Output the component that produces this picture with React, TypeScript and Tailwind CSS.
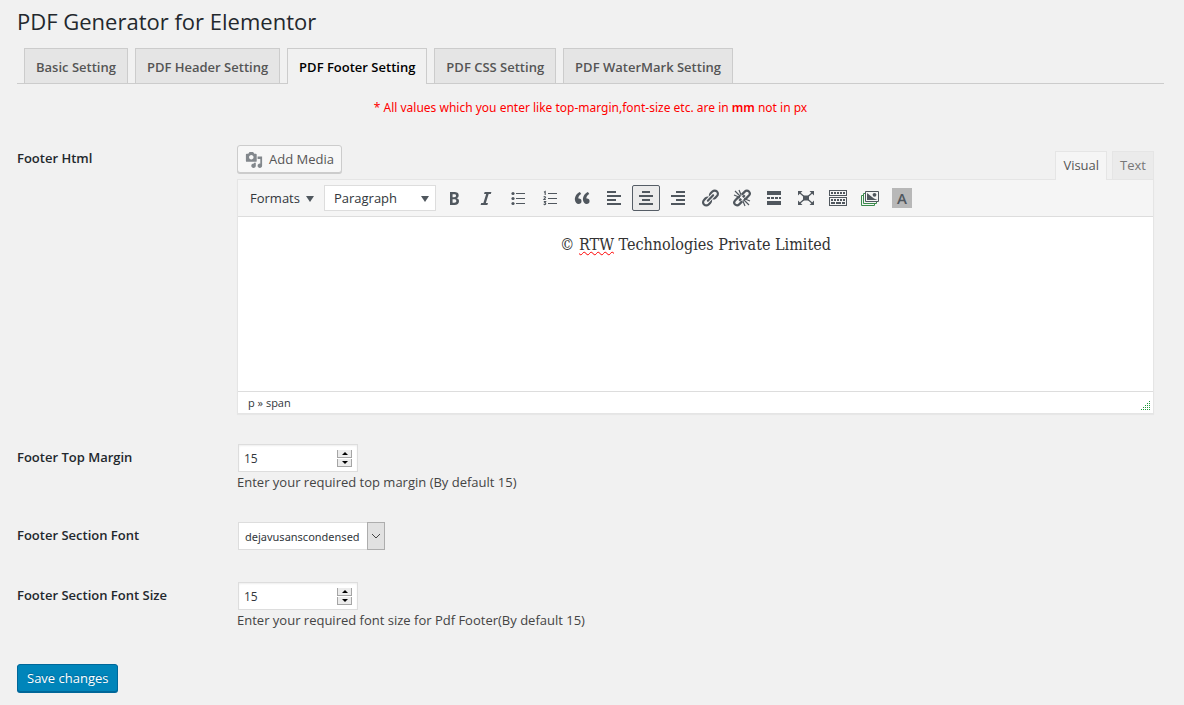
import { useState } from "react";
import type { ReactNode } from "react";

const tabs = [
  "Basic Setting",
  "PDF Header Setting",
  "PDF Footer Setting",
  "PDF CSS Setting",
  "PDF WaterMark Setting",
];

function Glyph({ children }: { children: ReactNode }) {
  return (
    <svg viewBox="0 0 20 20" className="size-5" fill="currentColor" aria-hidden="true">
      {children}
    </svg>
  );
}

const tools: { label: string; icon: ReactNode }[] = [
  {
    label: "Bold",
    icon: (
      <path d="M6 4v13h4.54c1.37 0 2.46-.33 3.26-1 .8-.66 1.2-1.58 1.2-2.77 0-.84-.17-1.51-.51-2.01s-.9-.85-1.67-1.03v-.09c.57-.1 1.02-.4 1.36-.9s.51-1.13.51-1.91c0-1.14-.39-1.98-1.17-2.5C12.75 4.26 11.5 4 9.78 4H6zm2.57 5.15V6.26h1.36c.73 0 1.27.11 1.61.32.34.22.51.58.51 1.07 0 .54-.16.92-.47 1.15s-.82.35-1.51.35h-1.5zm0 2.19h1.6c1.44 0 2.16.53 2.16 1.61 0 .6-.17 1.05-.51 1.34s-.86.43-1.57.43H8.57v-3.38z" />
    ),
  },
  {
    label: "Italic",
    icon: <path d="M14.78 6h-2.13l-2.8 9h2.12l-.62 2H4.6l.62-2h2.14l2.8-9H8.03l.62-2h6.75z" />,
  },
  {
    label: "Bulleted list",
    icon: (
      <>
        <circle cx="5" cy="5.5" r="1.6" />
        <circle cx="5" cy="10.5" r="1.6" />
        <circle cx="5" cy="15.5" r="1.6" />
        <path d="M8 5h9v1H8zM8 10h9v1H8zM8 15h9v1H8z" />
      </>
    ),
  },
  {
    label: "Numbered list",
    icon: (
      <>
        <path d="M8 5h9v1H8zM8 10h9v1H8zM8 15h9v1H8z" />
        <path
          d="M4 4.2l1.2-.7V7M3.8 9.2c.4-.8 2-.7 1.8.3-.1.7-1.2 1-1.8 2h2M3.8 13.5h1.8l-1 1.2c1.6 0 1.4 1.9.1 1.9-.5 0-.8-.1-1-.4"
          fill="none"
          stroke="currentColor"
          strokeWidth="1.1"
        />
      </>
    ),
  },
  {
    label: "Blockquote",
    icon: (
      <path d="M9.49 13.22c0-.74-.2-1.38-.61-1.9-.62-.78-1.83-.88-2.53-.72-.29-1.65 1.11-3.75 2.92-4.65L7.88 4c-2.73 1.3-5.42 4.28-4.96 8.05C3.21 14.43 4.59 16 6.54 16c.85 0 1.56-.25 2.12-.75s.83-1.18.83-2.03zm8.05 0c0-.74-.2-1.38-.61-1.9-.63-.78-1.83-.88-2.53-.72-.29-1.65 1.11-3.75 2.92-4.65L15.93 4c-2.73 1.3-5.41 4.28-4.95 8.05.29 2.38 1.66 3.95 3.61 3.95.85 0 1.56-.25 2.12-.75s.83-1.18.83-2.03z" />
    ),
  },
  { label: "Align left", icon: <path d="M12 5V3H3v2h9zm5 4V7H3v2h14zm-5 4v-2H3v2h9zm5 4v-2H3v2h14z" /> },
  { label: "Align center", icon: <path d="M14 5V3H6v2h8zm3 4V7H3v2h14zm-3 4v-2H6v2h8zm3 4v-2H3v2h14z" /> },
  { label: "Align right", icon: <path d="M17 5V3H8v2h9zm0 4V7H3v2h14zm0 4v-2H8v2h9zm0 4v-2H3v2h14z" /> },
  {
    label: "Insert link",
    icon: (
      <path d="M17.74 2.76c1.68 1.69 1.68 4.41 0 6.1l-1.53 1.52c-1.12 1.12-2.7 1.47-4.14 1.09l2.62-2.61.76-.77.76-.76c.84-.84.84-2.2 0-3.04-.84-.85-2.2-.85-3.04 0l-.77.76-3.38 3.38c-.37-1.44-.02-3.02 1.1-4.14l1.52-1.53c1.69-1.68 4.42-1.68 6.1 0zM8.59 13.43l5.34-5.34c.42-.42.42-1.1 0-1.52-.44-.43-1.13-.39-1.53 0l-5.33 5.34c-.42.42-.42 1.1 0 1.52.44.43 1.13.39 1.52 0zm-.76 2.29l4.14-4.15c.38 1.44.03 3.02-1.09 4.14l-1.52 1.53c-1.69 1.68-4.41 1.68-6.1 0-1.68-1.68-1.68-4.42 0-6.1l1.53-1.52c1.12-1.12 2.7-1.47 4.14-1.1l-4.14 4.15c-.85.84-.85 2.2 0 3.05.84.84 2.2.84 3.04 0z" />
    ),
  },
  {
    label: "Remove link",
    icon: (
      <g fill="none" stroke="currentColor">
        <path
          d="M9.8 6.6l3-3c1.2-1.2 3-1.2 4.1-.1s1.1 2.9 0 4.1l-2.5 2.5c-.7.7-1.5.9-2.4.8M10.2 13.4l-3 3c-1.2 1.2-3 1.2-4.1.1s-1.1-2.9 0-4.1l2.5-2.5c.7-.7 1.5-.9 2.4-.8M12.8 7.2l-2 2M9.200 10.800l-2 2"
          strokeWidth="2.2"
        />
        <path
          d="M8.500 8.500L3 3M7.500 9.300L2 7M9.300 7.500L7 2M11.500 11.500L17 17M12.500 10.700l5.500 2.300M10.700 12.500l2.300 5.500"
          strokeWidth="1.2"
        />
      </g>
    ),
  },
  {
    label: "Read more",
    icon: <path d="M3 3h14v4H3zM3 9h3v2H3zM7 9h3v2H7zM11 9h3v2h-3zM15 9h2v2h-2zM3 13h14v4H3z" />,
  },
  {
    label: "Fullscreen",
    icon: (
      <>
        <path d="M7 7.5h6v5H7z" />
        <path d="M2 3h4.5L2 7.5zM18 3h-4.5L18 7.5zM2 17h4.5L2 12.5zM18 17h-4.5l4.5-4.5z" />
        <path d="M4 5l4 3.5M16 5l-4 3.5M4 15l4-3.5M16 15l-4-3.5" stroke="currentColor" strokeWidth="1.3" />
      </>
    ),
  },
  {
    label: "Toolbar toggle",
    icon: (
      <>
        <path fillRule="evenodd" d="M1 2h18v6H1zM2 3v4h16V3zM1 9h18v9H1zM2 10v7h16v-7z" />
        <path d="M3 4h2v2H3zM6 4h2v2H6zM9 4h2v2H9zM12 4h2v2h-2zM15 4h2v2h-2zM3 11h2v2H3zM6 11h2v2H6zM9 11h2v2H9zM12 11h2v2h-2zM15 11h2v2h-2zM3 14h4v2H3zM8 14h5v2H8zM14 14h3v2h-3z" />
      </>
    ),
  },
  {
    label: "Image gallery",
    icon: (
      <>
        <g fill="#f5f5f5" stroke="#3a8a4c">
          <path d="M1.5 7.5h13v10h-13z" />
          <path d="M3.5 5.5h13v10h-13z" />
        </g>
        <path d="M5.5 3.5h13v10h-13z" fill="#f5f5f5" stroke="currentColor" />
        <path d="M7 12V5l5 4 2 1.5 3.5 1.5z" />
        <circle cx="14.5" cy="6.8" r="1.9" />
      </>
    ),
  },
];

function NumberField({ id, initial }: { id: string; initial: number }) {
  const [value, setValue] = useState(initial);
  const step = "flex h-2 w-[15px] items-center justify-center border-x border-b border-[#a5a5a5] bg-[#ececec]";
  return (
    <div className="ml-px flex h-7 w-[120px] items-center border border-[#dddddd] bg-white pr-[5px] shadow-[inset_0_1px_2px_rgba(0,0,0,0.07)]">
      <input
        id={id}
        type="number"
        value={value}
        onChange={(e) => setValue(Number(e.target.value))}
        className="min-w-0 flex-1 appearance-none bg-transparent px-[5px] pt-0.5 text-xs text-[#32373c] outline-none [-moz-appearance:textfield] [&::-webkit-inner-spin-button]:appearance-none"
      />
      <div className="flex flex-col gap-px">
        <button type="button" aria-label="Increase" onClick={() => setValue(value + 1)} className={step}>
          <svg viewBox="0 0 6 3" className="h-[3px] w-1.5"><path d="M3 0l3 3H0z" /></svg>
        </button>
        <button type="button" aria-label="Decrease" onClick={() => setValue(value - 1)} className={step}>
          <svg viewBox="0 0 6 3" className="h-[3px] w-1.5"><path d="M0 0h6L3 3z" /></svg>
        </button>
      </div>
    </div>
  );
}

function Row({ label, htmlFor, children }: { label: string; htmlFor: string; children: ReactNode }) {
  return (
    <div className="grid grid-cols-[220px_minmax(0,1fr)]">
      <label htmlFor={htmlFor} id={htmlFor + "-label"} className="text-[13px] leading-[26px] font-semibold text-[#23282d]">
        {label}
      </label>
      <div className="min-h-[30px] pr-2.5">{children}</div>
    </div>
  );
}

function Editor() {
  return (
    <>
      <div className="flex items-start justify-between">
        <button
          type="button"
          className="flex h-7 items-center gap-1.5 rounded-[3px] border border-[#cccccc] bg-[#f7f7f7] px-[7px] pt-0.5 text-[13px] text-[#555555] shadow-[0_1px_0_#cccccc]"
        >
          <svg viewBox="0 0 20 20" className="size-[18px]" fill="#82878c" aria-hidden="true">
            <path d="M13 11V4c0-.55-.45-1-1-1h-1.67L9 1H5L3.67 3H2c-.55 0-1 .45-1 1v7c0 .55.45 1 1 1h10c.55 0 1-.45 1-1zM7 4.5c1.38 0 2.5 1.12 2.5 2.5S8.38 9.5 7 9.5 4.5 8.38 4.5 7 5.62 4.5 7 4.5zM14 6h5v10.5c0 1.38-1.12 2.5-2.5 2.5S14 17.88 14 16.5s1.12-2.5 2.5-2.5c.17 0 .34.02.5.05V9h-3V6zm-4 8.05V13h2v3.5c0 1.38-1.12 2.5-2.5 2.5S7 17.88 7 16.5 8.12 14 9.5 14c.17 0 .34.02.5.05z" />
          </svg>
          Add Media
        </button>
        <div className="mt-1.5 -mb-px flex items-start gap-[5px] text-[13px]">
          <button type="button" className="relative h-[29px] border border-b-0 border-[#e5e5e5] bg-[#f5f5f5] px-[7px] text-[#555555]">
            Visual
          </button>
          <button type="button" className="h-7 border border-b-0 border-[#e5e5e5] bg-[#ebebeb] px-[7px] text-[#777777]">
            Text
          </button>
        </div>
      </div>
      <div className="border border-[#e5e5e5] bg-white shadow-[0_1px_1px_rgba(0,0,0,0.04)]">
        <div className="flex flex-wrap items-center gap-1 border-b border-[#dddddd] bg-[#f5f5f5] py-[5px] pl-3 text-[#50575e]">
          <button type="button" className="mr-1.5 flex h-[26px] items-center gap-1.5 pt-0.5 text-[13px] text-[#32373c]">
            Formats
            <svg viewBox="0 0 8 6" className="h-1.5 w-2" fill="#50575e"><path d="M0 0h8L4 6z" /></svg>
          </button>
          <button
            type="button"
            className="flex h-[26px] w-28 items-center justify-between border border-[#dddddd] bg-white pt-0.5 pr-1.5 pl-[9px] text-[13px] text-[#32373c]"
          >
            Paragraph
            <svg viewBox="0 0 8 6" className="h-1.5 w-2" fill="#50575e"><path d="M0 0h8L4 6z" /></svg>
          </button>
          {tools.map((tool) => (
            <button
              key={tool.label}
              type="button"
              aria-label={tool.label}
              className={
                tool.label === "Align center"
                  ? "flex h-[26px] w-7 items-center justify-center rounded-[2px] border border-[#555d66] bg-[#ebebeb]"
                  : "flex h-[26px] w-7 items-center justify-center"
              }
            >
              <Glyph>{tool.icon}</Glyph>
            </button>
          ))}
          <button type="button" aria-label="Text highlight" className="flex h-[26px] w-7 items-center justify-center">
            <span className="flex size-5 items-center justify-center bg-[#b8b8b8] text-[15px] font-semibold">A</span>
          </button>
        </div>
        <div
          id="footer-html"
          role="textbox"
          aria-multiline="true"
          aria-labelledby="footer-html-label"
          contentEditable
          suppressContentEditableWarning
          className="min-h-[174px] px-2.5 pt-4 text-center font-['Georgia','DejaVu_Serif_Condensed','DejaVu_Serif',serif] text-base leading-6 text-[#333333] outline-none"
        >
          © <span className="underline decoration-[#ff0000] decoration-wavy decoration-1">RTW</span> Technologies Private
          Limited
        </div>
        <div className="flex h-[22px] items-center justify-between border-t border-[#dddddd] pr-0.5 pl-2.5 text-[11px] text-[#32373c]">
          <span className="pt-0.5">p » span</span>
          <svg viewBox="0 0 10 10" className="mb-0.5 size-2.5 self-end" fill="#1f9a3a" shapeRendering="crispEdges" aria-hidden="true">
            <path d="M8 0h1v1H8zM6 2h1v1H6zM8 2h1v1H8zM4 4h1v1H4zM6 4h1v1H6zM8 4h1v1H8zM2 6h1v1H2zM4 6h1v1H4zM6 6h1v1H6zM8 6h1v1H8zM0 8h1v1H0zM2 8h1v1H2zM4 8h1v1H4zM6 8h1v1H6zM8 8h1v1H8z" />
          </svg>
        </div>
      </div>
    </>
  );
}

export default function App() {
  const [active, setActive] = useState("PDF Footer Setting");
  return (
    <main className="min-h-screen bg-[#f1f1f1] pt-[7px] pr-5 pb-2.5 pl-[17px] font-['Open_Sans',sans-serif] text-[13px] text-[#444444]">
      <h1 className="text-[22px] leading-7 text-[#23282d]">PDF Generator for Elementor</h1>
      <nav className="mt-[13px] flex items-end gap-[7px] border-b border-[#cccccc] pl-[7px]">
        {tabs.map((tab) => (
          <a
            key={tab}
            href="#"
            onClick={() => setActive(tab)}
            className={
              tab === active
                ? "-mb-px border border-b-0 border-[#cccccc] bg-[#f1f1f1] px-[11px] pt-1.5 pb-[5px] leading-6 font-semibold text-black"
                : "border border-b-0 border-[#cccccc] bg-[#e5e5e5] px-[11px] pt-1.5 pb-1 leading-6 font-semibold text-[#555555]"
            }
          >
            {tab}
          </a>
        ))}
      </nav>
      <p className="mt-3.5 text-center font-['Noto_Sans',sans-serif] text-xs leading-5 text-[#ff0000]">
        * All values which you enter like top-margin,font-size etc. are in <strong className="font-semibold">mm</strong> not in px
      </p>
      <form className="mt-[27px]" onSubmit={(e) => e.preventDefault()}>
        <div className="flex flex-col gap-[30px]">
          <Row label="Footer Html" htmlFor="footer-html">
            <Editor />
          </Row>
          <Row label="Footer Top Margin" htmlFor="footer-top-margin">
            <NumberField id="footer-top-margin" initial={15} />
            <p className="leading-5">Enter your required top margin (By default 15)</p>
          </Row>
          <Row label="Footer Section Font" htmlFor="footer-font">
            <div className="relative ml-px h-7 w-[147px]">
              <select
                id="footer-font"
                className="size-full appearance-none border border-[#dddddd] bg-white pt-0.5 pr-[18px] pl-1.5 font-['Noto_Sans',sans-serif] text-[11px] text-[#32373c]"
              >
                <option>dejavusanscondensed</option>
              </select>
              <span className="pointer-events-none absolute inset-y-0 right-0 flex w-[18px] items-center justify-center border border-[#adadad] bg-[#e1e1e1]">
                <svg viewBox="0 0 10 6" className="h-1.5 w-2.5" fill="none" stroke="#444444"><path d="M1 1l4 4 4-4" /></svg>
              </span>
            </div>
          </Row>
          <Row label="Footer Section Font Size" htmlFor="footer-font-size">
            <NumberField id="footer-font-size" initial={15} />
            <p className="leading-5">Enter your required font size for Pdf Footer(By default 15)</p>
          </Row>
        </div>
        <button
          type="submit"
          className="mt-[34px] h-7 rounded-[3px] border border-[#006799] bg-[#0085ba] px-[9px] pt-px text-[13px] text-white shadow-[0_1px_0_#006799] [text-shadow:0_-1px_1px_#006799]"
        >
          Save changes
        </button>
      </form>
    </main>
  );
}
